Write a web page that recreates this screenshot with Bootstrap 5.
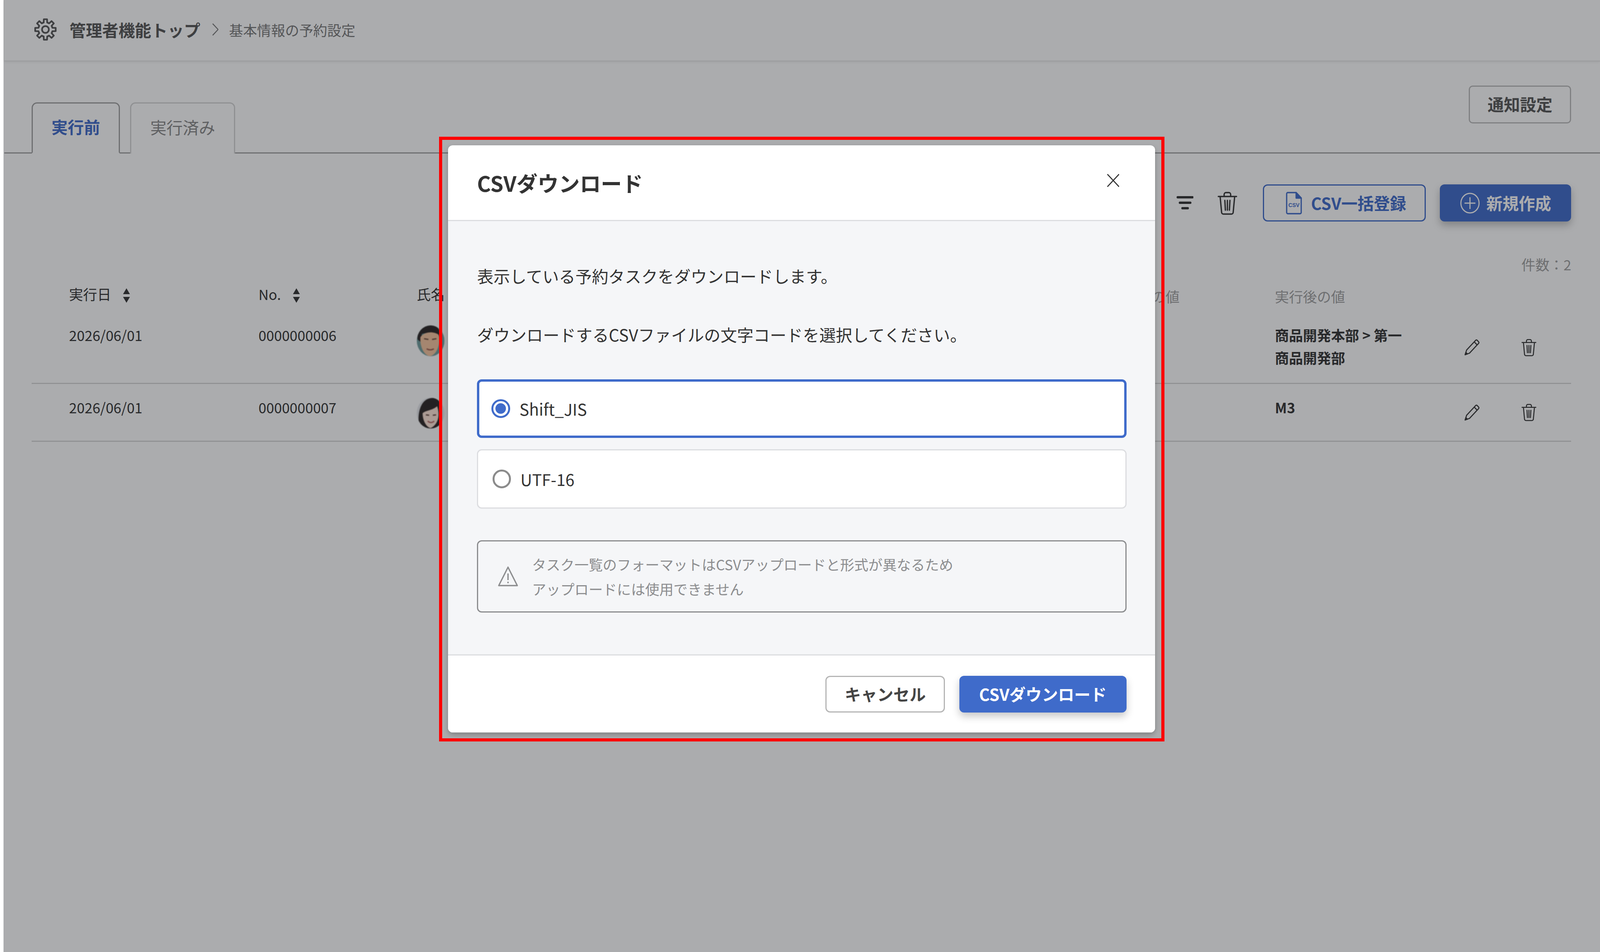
<!DOCTYPE html>
<html lang="ja">
<head>
  <meta charset="UTF-8">
  <meta name="viewport" content="width=device-width, initial-scale=1.0">
  <title>基本情報の予約設定</title>

  <link rel="stylesheet" href="https://cdn.jsdelivr.net/npm/bootstrap@5.3.0/dist/css/bootstrap.min.css" />
  <style>
    /* design width is 4400, --u is one design pixel across */
    :root { --u: calc(100vw / 4400); --f-m: calc(44.6 * var(--u)); --f-s: calc(38.6 * var(--u)); }
    body { background-color: #fff; color: #333; font-family: "Noto Sans CJK JP", "Noto Sans", sans-serif; font-size: var(--f-s); line-height: 58px; }
    .pg-main { margin-left: calc(12 * var(--u)); }

    /* page header */
    .pg-head { height: 157px; padding: 0 0 4px calc(82 * var(--u)); border-bottom: 2px solid #e4e4e4; box-shadow: 0 2px 6px rgba(0,0,0,.08); }
    .pg-gear { width: calc(63 * var(--u)); height: 63px; margin-right: calc(34 * var(--u)); }
    .pg-title { font-size: calc(45 * var(--u)); font-weight: 700; color: #555; }
    .pg-chev { width: calc(18 * var(--u)); height: 35px; margin: 0 calc(29 * var(--u)) 0 calc(32 * var(--u)); }
    .pg-crumb { color: #777; }

    /* tabs */
    .tab-row { margin-top: 62px; height: 174px; padding: 0 calc(79 * var(--u)) 0 calc(75 * var(--u)); border-bottom: 3px solid #a0a0a0; }
    .tab-row .nav-tabs { border: 0; gap: calc(28 * var(--u)); margin-bottom: -3px; align-self: flex-end; }
    .tab-row .nav-link { height: 131px; margin: 0; padding: 0 0 8px; display: flex; align-items: center; justify-content: center; font-size: var(--f-m); color: #888; border: 3px solid #d4d4d4; border-bottom: 0; border-radius: 14px 14px 0 0; background: #fff; }
    .tab-row .nav-link.active { width: calc(243 * var(--u)); color: #3f6bca; font-weight: 700; border-color: #a0a0a0; border-bottom: 3px solid #fff; }
    .tab-row .tab-off { width: calc(289 * var(--u)); }
    .btn-notice { width: calc(282 * var(--u)); height: 97px; padding: 0 0 3px; font-size: var(--f-m); font-weight: 700; color: #555; border: 3px solid #bbb; border-radius: 10px; background: #fff; }

    /* toolbar */
    .tool-row { margin-top: 79px; padding-right: calc(79 * var(--u)); }
    .tool-filter { width: calc(47 * var(--u)); height: 37px; margin-right: calc(66 * var(--u)); }
    .tool-trash { width: calc(54 * var(--u)); height: 60px; margin-right: calc(71 * var(--u)); }
    .btn-bulk, .btn-new { height: 95px; padding: 0; font-size: var(--f-m); font-weight: 700; border-radius: 12px; }
    .btn-bulk { width: calc(448 * var(--u)); margin-right: calc(39 * var(--u)); gap: calc(25 * var(--u)); padding-left: calc(60 * var(--u)); color: #3f6bca; background: #fff; border: 3px solid #3f6bca; }
    .btn-bulk svg { width: calc(44 * var(--u)); height: 58px; }
    .btn-new { width: calc(361 * var(--u)); gap: calc(18 * var(--u)); color: #fff; background: #3f6bca; border: 0; box-shadow: 0 10px 20px rgba(0,0,0,.25); }
    .btn-new svg { width: calc(54 * var(--u)); height: 54px; }

    .count-row { margin-top: 80px; padding-right: calc(79 * var(--u)); color: #a0a0a0; }

    /* task table */
    .task-wrap { margin-left: calc(75 * var(--u)); width: calc(4234 * var(--u)); }
    .task-tbl { table-layout: fixed; width: 100%; margin: 0; --bs-table-color: #333; --bs-table-bg: transparent; }
    .task-tbl th { font-weight: 400; padding: 18px 0 17px; border: 0; vertical-align: bottom; }
    .task-tbl th.th-plain { color: #a0a0a0; padding-bottom: 11px; }
    .task-tbl td { padding: 30px 0 36px; border-bottom: 3px solid #d6d6d6; vertical-align: top; }
    .task-tbl td.td-ava { padding: 35px 0 31px; }
    .task-tbl td.td-tools { padding: 0 0 0 calc(130 * var(--u)); vertical-align: middle; }
    .task-tbl th.col-date, .task-tbl td.col-date { width: calc(624 * var(--u)); padding-left: calc(103 * var(--u)); }
    .task-tbl .col-no { width: calc(435 * var(--u)); }
    .task-tbl .col-name { width: calc(1905 * var(--u)); }
    .task-tbl .col-before { width: calc(455 * var(--u)); }
    .task-tbl .col-after { width: calc(390 * var(--u)); }
    .task-tbl td.col-after { padding-right: calc(10 * var(--u)); }
    .task-tbl .col-tools { width: calc(425 * var(--u)); }
    .sort-ico { width: calc(21 * var(--u)); height: 39px; margin-left: calc(32 * var(--u)); vertical-align: -8px; }
    .ava-box { height: 79px; }
    .ava-pic { display: block; width: calc(76 * var(--u)); height: 79px; border-radius: 50%; overflow: hidden; filter: blur(.8px); }
    .tool-pen { width: calc(44 * var(--u)); height: 44px; margin-right: calc(114 * var(--u)); }
    .tool-bin { width: calc(41 * var(--u)); height: 45px; }

    /* modal */
    .modal-backdrop.show { left: calc(10 * var(--u)); width: auto; right: 0; background: rgb(22,24,30); opacity: .36; }
    .csv-dialog.modal-dialog { width: calc(1944 * var(--u)); max-width: none; margin: 372px 0 0 calc(1232 * var(--u)); }
    .csv-box { height: 1503px; border: 0; border-radius: 12px; box-shadow: 0 6px 14px rgba(0,0,0,.25); overflow: hidden; color: #333; font-size: var(--f-m); line-height: 63px; }
    .csv-box .modal-header { height: 194px; flex: none; padding: 0 calc(98 * var(--u)) 0 calc(80 * var(--u)); border-bottom: 3px solid #dcdde0; }
    .csv-box .modal-title { font-size: calc(58 * var(--u)); font-weight: 700; line-height: 80px; color: #333; }
    .csv-x { width: calc(34 * var(--u)); height: 34px; padding: 0; margin-top: -12px; background: none; border: 0; line-height: 0; }
    .csv-x svg { width: 100%; height: 34px; }
    .csv-box .modal-body { padding: 108px calc(78 * var(--u)) 0 calc(80 * var(--u)); background: #f5f6f8; flex: none; height: 1109px; }
    .csv-box p { margin: 0 0 87px; font-size: calc(45.3 * var(--u)); }
    .csv-box p.last-p { margin-bottom: 84px; }
    .enc-opt { height: 152px; margin: 0 0 29px; padding-left: calc(39 * var(--u)); background: #fff; border: 3px solid #dcdde0; border-radius: 12px; gap: calc(26 * var(--u)); }
    .enc-opt.enc-on { height: 150px; padding-left: calc(33 * var(--u)); border: 6px solid #3f6bca; }
    .enc-opt .form-check-input { width: calc(51 * var(--u)); height: calc(51 * var(--u)); margin: 0; flex: none; background-color: #fff; border: 5px solid #8b8b8b; }
    .enc-opt .form-check-input:checked { background-color: #fff; border-color: #3f6bca; background-image: radial-gradient(circle, #3f6bca 0 calc(14 * var(--u)), transparent calc(15 * var(--u))); }
    .csv-note { height: 185px; margin: 81px 0 0; padding: 0 0 0 calc(53 * var(--u)); gap: calc(38 * var(--u)); color: #8c8d8f; background: transparent; border: 3px solid #8b8c8e; border-radius: 12px; font-size: calc(38.9 * var(--u)); line-height: 63px; }
    .csv-note svg { width: calc(57 * var(--u)); height: 54px; flex: none; }
    .csv-box .modal-footer { --bs-modal-footer-gap: 0; flex: 1; padding: 0 calc(78 * var(--u)) 0 0; gap: calc(39 * var(--u)); align-items: center; border-top: 3px solid #dcdde0; background: #fff; }
    .csv-box .modal-footer > * { margin: 0; }
    .btn-cancel, .btn-down { height: 94px; padding: 0; font-size: var(--f-m); font-weight: 700; border-radius: 12px; }
    .btn-cancel { width: calc(329 * var(--u)); color: #444; background: #fff; border: 3px solid #b5b5b5; }
    .btn-down { width: calc(460 * var(--u)); color: #fff; background: #3f6bca; border: 0; box-shadow: 0 10px 20px rgba(0,0,0,.22); }

    /* red annotation frame */
    .mark-frame { position: fixed; z-index: 2000; left: calc(1207 * var(--u)); top: 350px; width: calc(1995 * var(--u)); height: 1548px; border: 8px solid #f00; pointer-events: none; }
  </style>
</head>
<body>

  <div class="pg-main">

    <!-- ヘッダー -->
    <div class="pg-head d-flex align-items-center">
      <svg class="pg-gear" viewBox="0 0 64 64" fill="none" stroke="#555" stroke-width="4.6" stroke-linejoin="round" stroke-linecap="round">
        <defs><path id="gearTooth" d="M24.35 13.52L27.16 12.6L27.46 3.35H36.54L36.84 12.6L39.65 13.52"/></defs>
        <use href="#gearTooth"/>
        <use href="#gearTooth" transform="rotate(45 32 32)"/>
        <use href="#gearTooth" transform="rotate(90 32 32)"/>
        <use href="#gearTooth" transform="rotate(135 32 32)"/>
        <use href="#gearTooth" transform="rotate(180 32 32)"/>
        <use href="#gearTooth" transform="rotate(225 32 32)"/>
        <use href="#gearTooth" transform="rotate(270 32 32)"/>
        <use href="#gearTooth" transform="rotate(315 32 32)"/>
        <circle cx="32" cy="32" r="9.5"/>
      </svg>
      <span class="pg-title">管理者機能トップ</span>
      <svg class="pg-chev" viewBox="0 0 18 35" fill="none" stroke="#777" stroke-width="2.6"><path d="M1.5 1.5L16.5 17.5L1.5 33.5"/></svg>
      <span class="pg-crumb">基本情報の予約設定</span>
    </div>

    <!-- タブ -->
    <div class="tab-row d-flex justify-content-between align-items-start">
      <ul class="nav nav-tabs">
        <li class="nav-item"><a class="nav-link active" href="#">実行前</a></li>
        <li class="nav-item"><a class="nav-link tab-off" href="#">実行済み</a></li>
      </ul>
      <button type="button" class="btn btn-notice">通知設定</button>
    </div>

    <!-- ツールバー -->
    <div class="tool-row d-flex justify-content-end align-items-center">
      <svg class="tool-filter" viewBox="0 0 47 37" preserveAspectRatio="none" fill="none" stroke="#333" stroke-width="6" stroke-linecap="round"><path d="M3 4H44M9 18H38M16 32H31"/></svg>
      <svg class="tool-trash" viewBox="0 0 54 60" preserveAspectRatio="none" fill="none" stroke="#333" stroke-width="3.6" stroke-linecap="round" stroke-linejoin="round"><path d="M2 13H52M18 13V8a5 5 0 0 1 5-5h8a5 5 0 0 1 5 5v5M7 13l4 40a5 5 0 0 0 5 5h22a5 5 0 0 0 5-5l4-40M20 23l1.5 25M27 23v25M34 23l-1.5 25"/></svg>
      <button type="button" class="btn btn-bulk d-flex align-items-center">
        <svg viewBox="0 0 44 58" preserveAspectRatio="none" fill="none" stroke="#3f6bca" stroke-width="3.4" stroke-linejoin="round"><path d="M5 2H28L42 16V53a3 3 0 0 1-3 3H5a3 3 0 0 1-3-3V5a3 3 0 0 1 3-3z"/><path d="M28 2L42 16H28z" fill="#3f6bca"/><text x="22" y="39" text-anchor="middle" font-size="15" font-weight="700" fill="#3f6bca" stroke="none" font-family="Liberation Sans, sans-serif">CSV</text></svg>
        <span>CSV一括登録</span>
      </button>
      <button type="button" class="btn btn-new d-flex align-items-center justify-content-center">
        <svg viewBox="0 0 54 54" preserveAspectRatio="none" fill="none" stroke="#fff" stroke-width="3"><circle cx="27" cy="27" r="25"/><path d="M27 12V42M12 27H42"/></svg>
        <span>新規作成</span>
      </button>
    </div>

    <div class="count-row text-end">件数：2</div>

    <!-- 一覧 -->
    <div class="task-wrap">
      <table class="table task-tbl">
        <thead>
          <tr>
            <th class="col-date">実行日<svg class="sort-ico" viewBox="0 0 21 39" preserveAspectRatio="none" fill="#333"><path d="M10.5 1L20 16H1zM1 23H20L10.5 38z"/></svg></th>
            <th class="col-no">No.<svg class="sort-ico" viewBox="0 0 21 39" preserveAspectRatio="none" fill="#333"><path d="M10.5 1L20 16H1zM1 23H20L10.5 38z"/></svg></th>
            <th class="col-name">氏名</th>
            <th class="col-before th-plain">実行前の値</th>
            <th class="col-after th-plain">実行後の値</th>
            <th class="col-tools"></th>
          </tr>
        </thead>
        <tbody>
          <tr>
            <td class="col-date">2026/06/01</td>
            <td>0000000006</td>
            <td class="td-ava">
              <div class="ava-box">
                <svg class="ava-pic" viewBox="0 0 76 79" preserveAspectRatio="none">
                  <rect width="76" height="79" fill="#6f9c9c"/>
                  <path d="M2 36C0 10 20 0 38 0S66 10 64 30C50 16 30 18 14 22L10 42z" fill="#2b2524"/>
                  <path d="M10 30C20 16 46 14 60 24 66 50 54 76 36 79 18 76 8 52 10 30z" fill="#f6c49e"/>
                  <path d="M20 34l12 2M42 36l12-2" stroke="#6a4a3a" stroke-width="3.2"/>
                  <path d="M27 60q10 5 20 0" stroke="#9a5a4c" stroke-width="3.2" fill="none"/>
                </svg>
              </div>
            </td>
            <td></td>
            <td class="col-after fw-bold">商品開発本部 &gt; 第一商品開発部</td>
            <td class="td-tools">
              <div class="d-flex align-items-center">
                <svg class="tool-pen" viewBox="0 0 44 44" preserveAspectRatio="none" fill="none" stroke="#333" stroke-width="2.8" stroke-linejoin="round"><path d="M3 41L7 29L32 4a3 3 0 0 1 4 0L40 8a3 3 0 0 1 0 4L15 37z"/><path d="M28 8L36 16"/><path d="M3 41L5 35L9 39z" fill="#333"/></svg>
                <svg class="tool-bin" viewBox="0 0 54 60" preserveAspectRatio="none" fill="none" stroke="#333" stroke-width="3.6" stroke-linecap="round" stroke-linejoin="round"><path d="M2 13H52M18 13V8a5 5 0 0 1 5-5h8a5 5 0 0 1 5 5v5M7 13l4 40a5 5 0 0 0 5 5h22a5 5 0 0 0 5-5l4-40M20 23l1.5 25M27 23v25M34 23l-1.5 25"/></svg>
              </div>
            </td>
          </tr>
          <tr>
            <td class="col-date">2026/06/01</td>
            <td>0000000007</td>
            <td class="td-ava">
              <div class="ava-box">
                <svg class="ava-pic" viewBox="0 0 76 79" preserveAspectRatio="none">
                  <rect width="76" height="79" fill="#e4e6ea"/>
                  <path d="M8 79C0 50 6 4 40 1S70 40 66 79z" fill="#2b2524"/>
                  <path d="M16 40C24 32 40 34 56 22 64 44 60 68 38 78 24 74 16 56 16 40z" fill="#ffe4d6"/>
                  <path d="M25 44l9 1M44 45l9-1" stroke="#5a4038" stroke-width="3"/>
                  <path d="M30 60q9 7 18 0" stroke="#b66a66" stroke-width="3.4" fill="#fff"/>
                </svg>
              </div>
            </td>
            <td></td>
            <td class="col-after fw-bold">M3</td>
            <td class="td-tools">
              <div class="d-flex align-items-center">
                <svg class="tool-pen" viewBox="0 0 44 44" preserveAspectRatio="none" fill="none" stroke="#333" stroke-width="2.8" stroke-linejoin="round"><path d="M3 41L7 29L32 4a3 3 0 0 1 4 0L40 8a3 3 0 0 1 0 4L15 37z"/><path d="M28 8L36 16"/><path d="M3 41L5 35L9 39z" fill="#333"/></svg>
                <svg class="tool-bin" viewBox="0 0 54 60" preserveAspectRatio="none" fill="none" stroke="#333" stroke-width="3.6" stroke-linecap="round" stroke-linejoin="round"><path d="M2 13H52M18 13V8a5 5 0 0 1 5-5h8a5 5 0 0 1 5 5v5M7 13l4 40a5 5 0 0 0 5 5h22a5 5 0 0 0 5-5l4-40M20 23l1.5 25M27 23v25M34 23l-1.5 25"/></svg>
              </div>
            </td>
          </tr>
        </tbody>
      </table>
    </div>
  </div>

  <!-- CSVダウンロード モーダル -->
  <div class="modal-backdrop show"></div>
  <div class="modal d-block" tabindex="-1">
    <div class="modal-dialog csv-dialog">
      <div class="modal-content csv-box">
        <div class="modal-header">
          <h5 class="modal-title">CSVダウンロード</h5>
          <button type="button" class="csv-x" aria-label="Close">
            <svg viewBox="0 0 34 34" preserveAspectRatio="none" fill="none" stroke="#333" stroke-width="2.8"><path d="M1 1L33 33M33 1L1 33"/></svg>
          </button>
        </div>
        <div class="modal-body">
          <p>表示している予約タスクをダウンロードします。</p>
          <p class="last-p">ダウンロードするCSVファイルの文字コードを選択してください。</p>
          <label class="enc-opt enc-on d-flex align-items-center">
            <input class="form-check-input" type="radio" name="enc" checked>
            <span>Shift_JIS</span>
          </label>
          <label class="enc-opt d-flex align-items-center">
            <input class="form-check-input" type="radio" name="enc">
            <span>UTF-16</span>
          </label>
          <div class="alert csv-note d-flex align-items-center">
            <svg viewBox="0 0 57 54" preserveAspectRatio="none" fill="none" stroke="#8c8d8f" stroke-width="3.6" stroke-linejoin="round"><path d="M28.5 3L54 50H3z"/><path d="M28.5 19V36M28.5 40V44"/></svg>
            <div>タスク一覧のフォーマットはCSVアップロードと形式が異なるため<br>アップロードには使用できません</div>
          </div>
        </div>
        <div class="modal-footer">
          <button type="button" class="btn btn-cancel">キャンセル</button>
          <button type="button" class="btn btn-down">CSVダウンロード</button>
        </div>
      </div>
    </div>
  </div>

  <div class="mark-frame"></div>

  <script src="https://cdn.jsdelivr.net/npm/bootstrap@5.3.0/dist/js/bootstrap.bundle.min.js"></script>
</body>
</html>
